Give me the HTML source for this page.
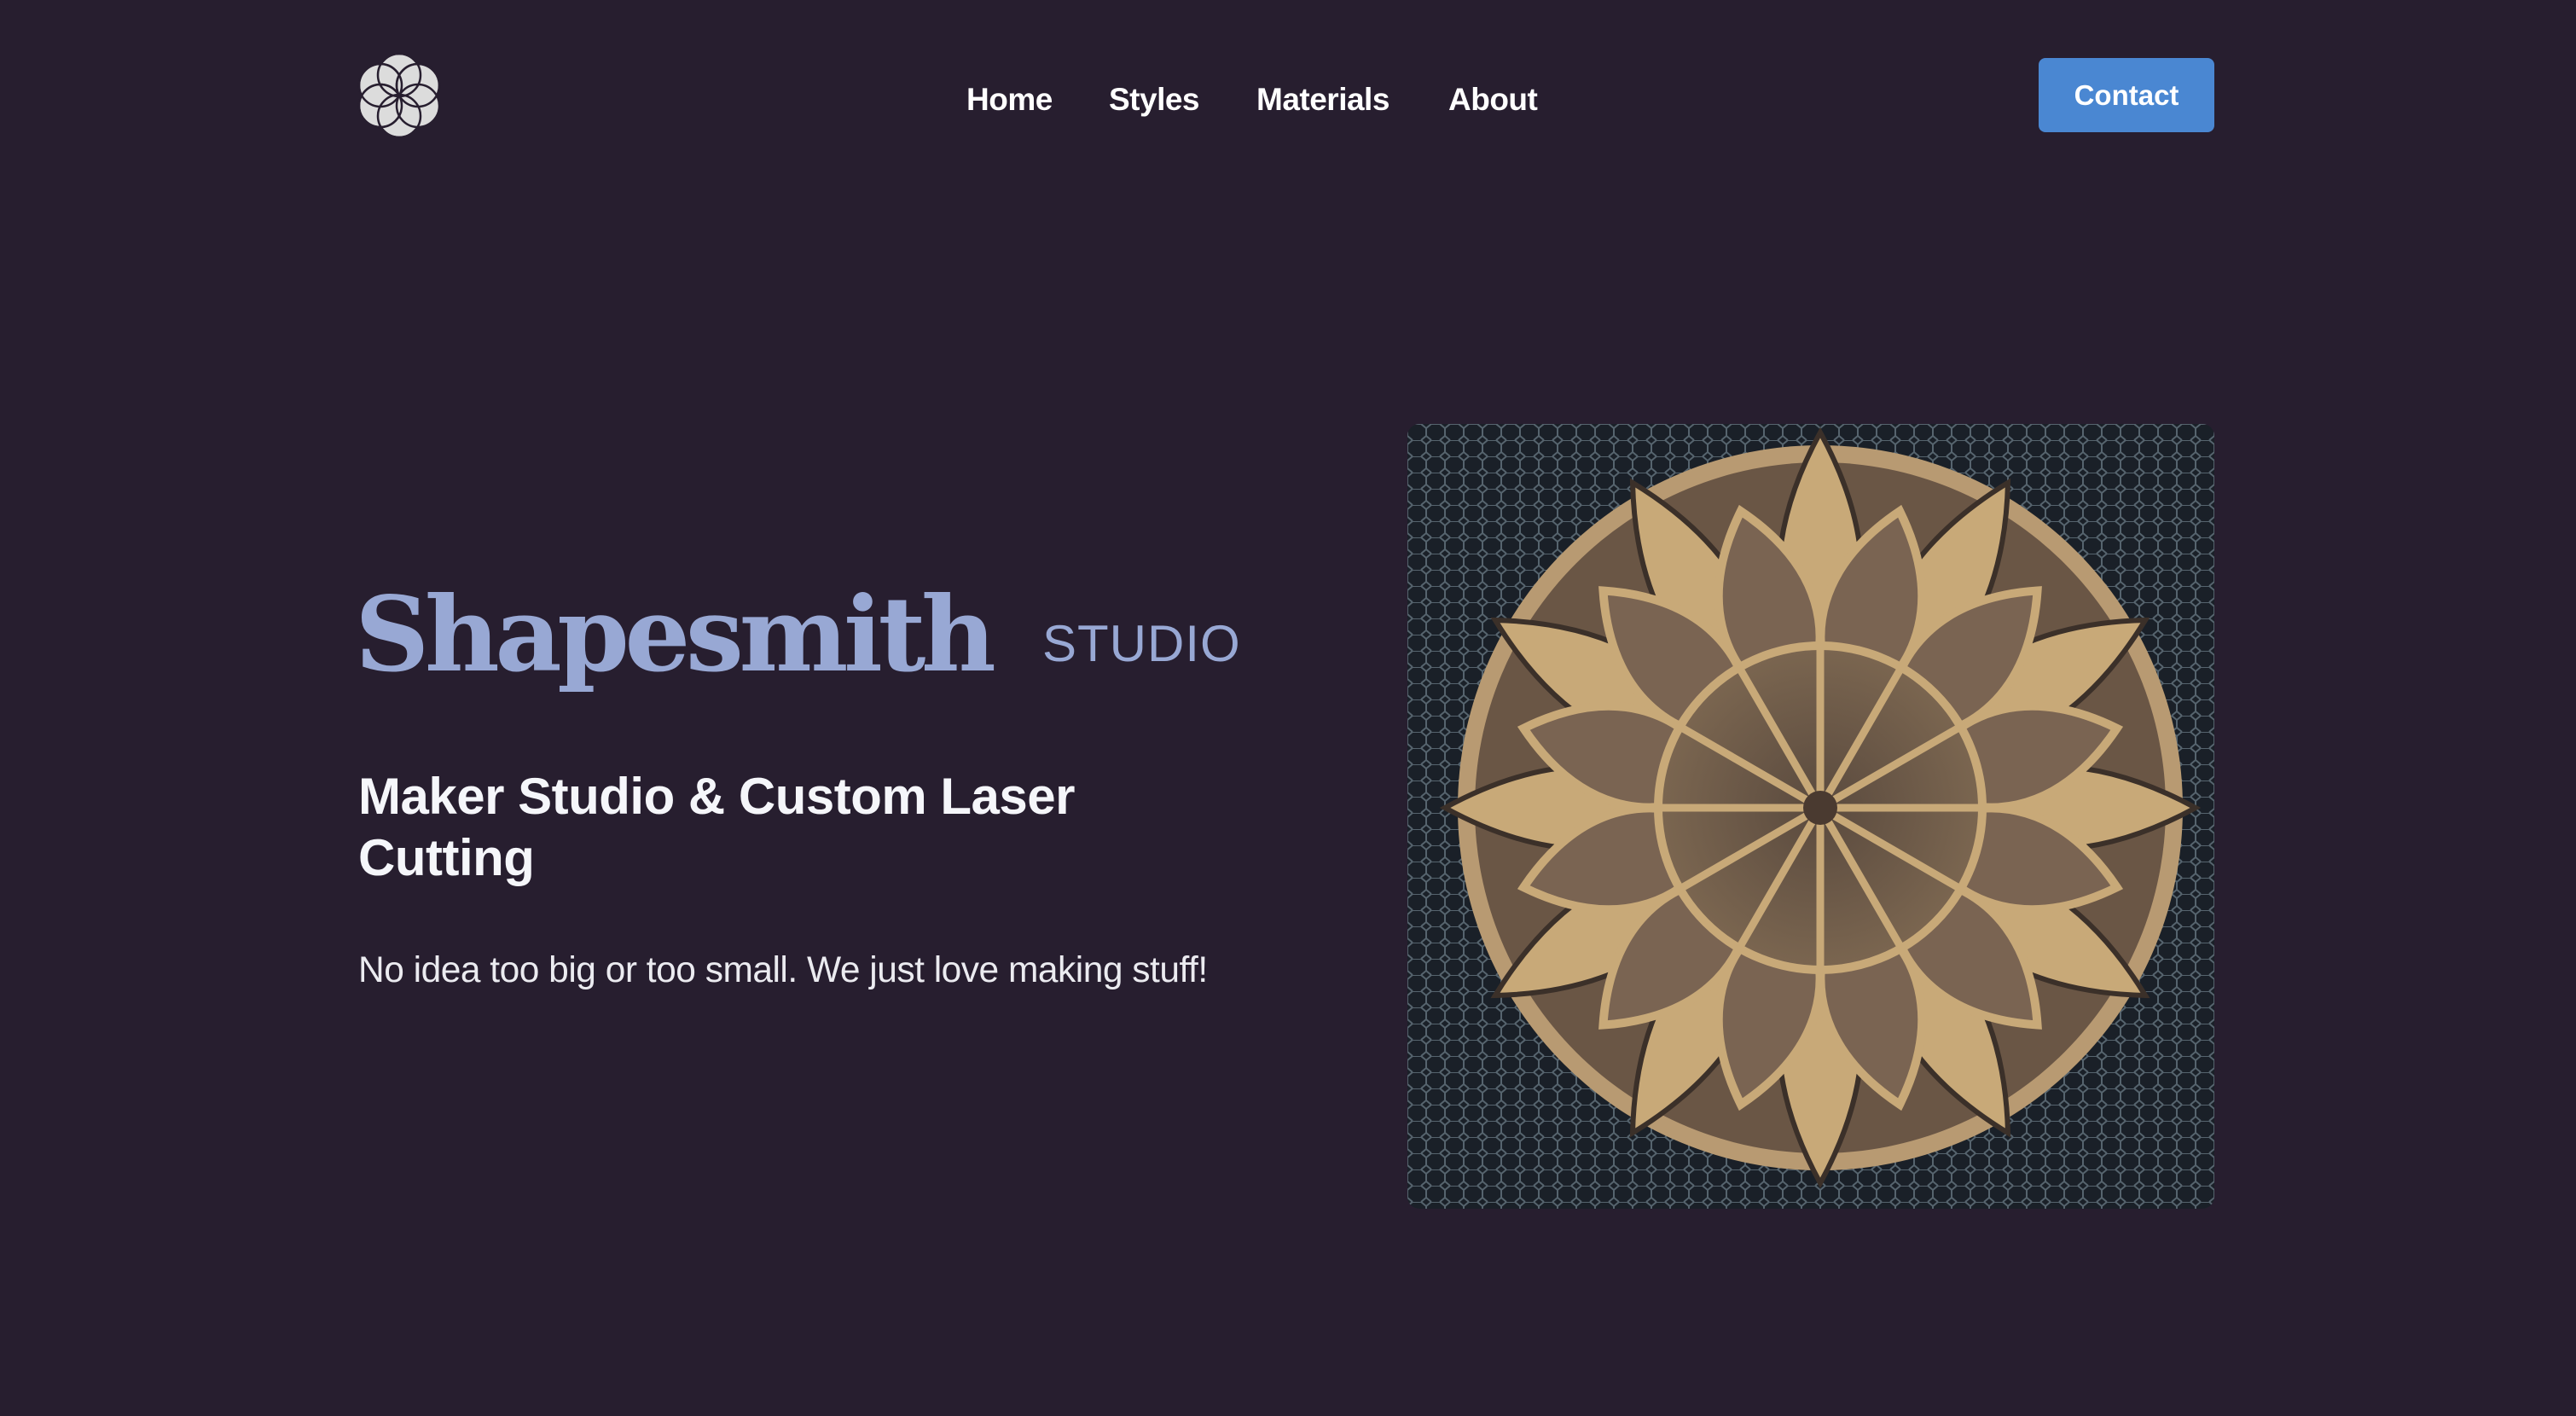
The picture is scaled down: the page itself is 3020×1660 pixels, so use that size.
<!DOCTYPE html>
<html><head><meta charset="utf-8">
<style>
*{margin:0;padding:0;box-sizing:border-box}
body{width:3020px;height:1660px;background:#271e2f;font-family:"Liberation Sans",sans-serif;position:relative;overflow:hidden;color:#f5f6fa}
.nav a{position:absolute;top:96px;font-size:37px;font-weight:bold;color:#fff;text-decoration:none;letter-spacing:-0.5px}
.btn{position:absolute;left:2390px;top:68px;width:206px;height:87px;background:#4a87d2;border-radius:8px;color:#fff;font-weight:bold;font-size:33px;text-align:center;line-height:87px}
.title{position:absolute;left:416px;top:672px;font-family:"DejaVu Serif","Liberation Serif",serif;font-weight:bold;font-size:121px;color:#98a8d4;letter-spacing:-5.5px;white-space:nowrap}
.studio{position:absolute;left:1222px;top:720px;font-size:60px;color:#98a8d4;letter-spacing:1px}
h2{position:absolute;left:420px;top:898px;font-size:60px;line-height:72px;font-weight:bold;width:980px;letter-spacing:-0.5px}
p{position:absolute;left:420px;top:1114px;font-size:42.5px;color:#ebebf0;letter-spacing:-0.5px}
.img{position:absolute;left:1650px;top:497px;width:946px;height:920px;border-radius:14px;overflow:hidden}
</style></head><body>
<svg style="position:absolute;left:418px;top:60px" width="100" height="104" viewBox="0 0 100 104">
<g fill="#dcdcdc" stroke="#271e2f" stroke-width="2.5">
<circle cx="50" cy="28" r="25"/><circle cx="50" cy="76" r="25"/>
<circle cx="28" cy="40" r="25"/><circle cx="72" cy="40" r="25"/>
<circle cx="28" cy="64" r="25"/><circle cx="72" cy="64" r="25"/>
</g>
<g fill="none" stroke="#271e2f" stroke-width="2.5">
<circle cx="50" cy="28" r="25"/><circle cx="50" cy="76" r="25"/>
<circle cx="28" cy="40" r="25"/><circle cx="72" cy="40" r="25"/>
<circle cx="28" cy="64" r="25"/>
</g>
</svg>
<div class="nav">
<a style="left:1133px">Home</a>
<a style="left:1300px">Styles</a>
<a style="left:1473px">Materials</a>
<a style="left:1698px">About</a>
</div>
<div class="btn">Contact</div>
<div class="title">Shapesmith</div>
<div class="studio">STUDIO</div>
<h2>Maker Studio &amp; Custom Laser Cutting</h2>
<p>No idea too big or too small. We just love making stuff!</p>
<div class="img">
<svg width="946" height="920" viewBox="0 0 946 920">
<defs>
<pattern id="hex" width="22" height="19" patternUnits="userSpaceOnUse">
<rect width="22" height="19" fill="#1a2028"/>
<path d="M0 5 L6 0 L16 0 L22 5 M6 19 L0 14 L0 5 M22 5 L22 14 L16 19 M0 14 L6 19" fill="none" stroke="#56646e" stroke-width="2"/>
</pattern>
<radialGradient id="rg" cx="50%" cy="50%" r="50%">
<stop offset="0" stop-color="#5a4a3e"/><stop offset="1" stop-color="#7b6650"/>
</radialGradient>
</defs>
<rect width="946" height="920" fill="url(#hex)"/>
<g transform="translate(484 450)">
<circle r="425" fill="#b89a72"/>
<circle r="405" fill="#6a5645"/>
<g fill="#c8a978" stroke="#3b3029" stroke-width="6">
<g id="pet"><path d="M0 -440 C60 -330 70 -220 0 -120 C-70 -220 -60 -330 0 -440Z"/></g>
<use href="#pet" transform="rotate(30)"/><use href="#pet" transform="rotate(60)"/>
<use href="#pet" transform="rotate(90)"/><use href="#pet" transform="rotate(120)"/>
<use href="#pet" transform="rotate(150)"/><use href="#pet" transform="rotate(180)"/>
<use href="#pet" transform="rotate(210)"/><use href="#pet" transform="rotate(240)"/>
<use href="#pet" transform="rotate(270)"/><use href="#pet" transform="rotate(300)"/>
<use href="#pet" transform="rotate(330)"/>
</g>
<g fill="#7a6452" stroke="#c8a978" stroke-width="10">
<g id="pet2"><path d="M0 -360 C70 -280 80 -190 0 -110 C-80 -190 -70 -280 0 -360Z" transform="rotate(15)"/></g>
<use href="#pet2" transform="rotate(30)"/><use href="#pet2" transform="rotate(60)"/>
<use href="#pet2" transform="rotate(90)"/><use href="#pet2" transform="rotate(120)"/>
<use href="#pet2" transform="rotate(150)"/><use href="#pet2" transform="rotate(180)"/>
<use href="#pet2" transform="rotate(210)"/><use href="#pet2" transform="rotate(240)"/>
<use href="#pet2" transform="rotate(270)"/><use href="#pet2" transform="rotate(300)"/>
<use href="#pet2" transform="rotate(330)"/>
</g>
<circle r="190" fill="url(#rg)" stroke="#c8a978" stroke-width="10"/>
<g stroke="#c8a978" stroke-width="9">
<line y1="-200" y2="200"/><line x1="-200" x2="200"/>
<line x1="-173" y1="-100" x2="173" y2="100"/><line x1="-173" y1="100" x2="173" y2="-100"/>
<line x1="-100" y1="-173" x2="100" y2="173"/><line x1="-100" y1="173" x2="100" y2="-173"/>
</g>
<circle r="20" fill="#4a3a30"/>
</g>
</svg>
</div>
</body></html>
